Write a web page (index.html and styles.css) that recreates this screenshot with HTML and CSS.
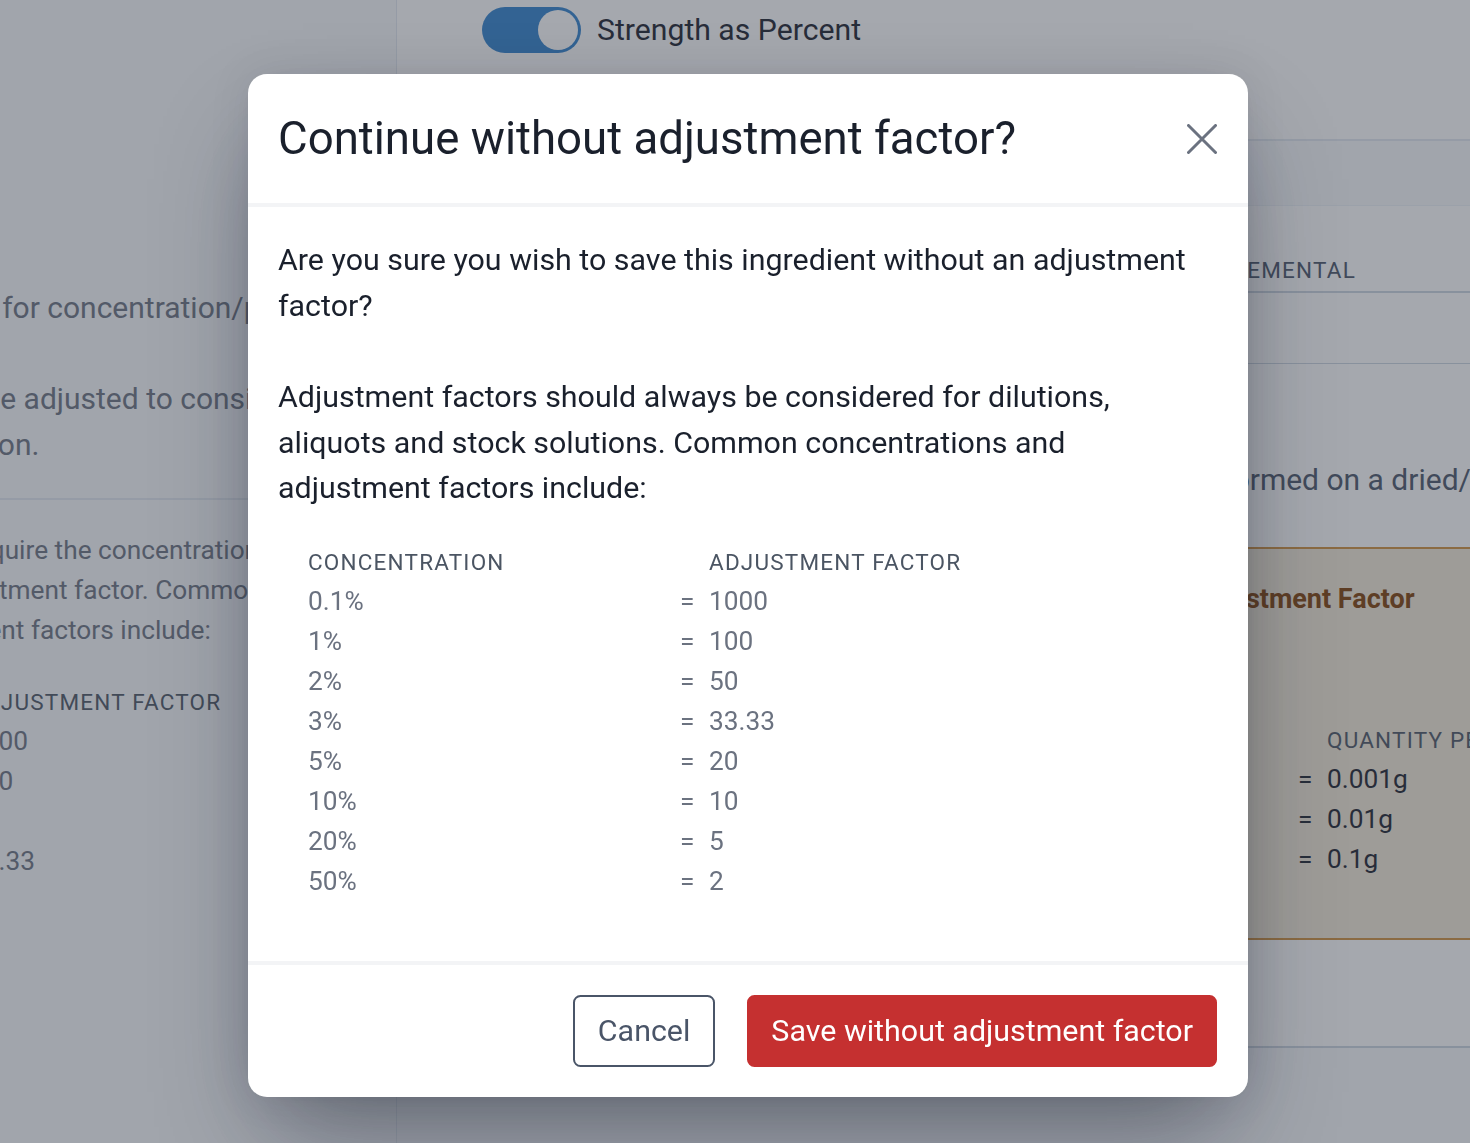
FILE: index.html
```html
<!DOCTYPE html>
<html lang="en">
<head>
  <meta charset="UTF-8" />
  <title>Ingredient Strength</title>
  <link rel="stylesheet" href="styles.css">
</head>
<body>

  <!-- Ingredient page (behind the dialog) -->
  <div class="page">
    <aside class="sidebar">
      <p class="note note-lead">Strength is used for concentration/purity calculations.</p>
      <p class="note">Amounts must be adjusted to consider the dilution<br>in the final solution.</p>
      <hr class="rule">
      <p class="note note-small">Diluted solutions require the concentration<br>along with the adjustment factor. Common<br>doses and adjustment factors include:</p>
      <div class="factor-table side-table">
        <span class="th">Concentration</span><span></span><span class="th">Adjustment Factor</span>
        <span>0.1%</span><span>=</span><span>1000</span>
        <span>1%</span><span>=</span><span>100</span>
        <span>2%</span><span>=</span><span>50</span>
        <span>3%</span><span>=</span><span>33.33</span>
        <span>5%</span><span>=</span><span>20</span>
        <span>10%</span><span>=</span><span>10</span>
        <span>20%</span><span>=</span><span>5</span>
        <span>50%</span><span>=</span><span>2</span>
      </div>
    </aside>

    <main class="main">
      <div class="toolbar">
        <label class="switch">
          <span class="track"><span class="knob"></span></span>
          Strength as Percent
        </label>
      </div>

      <section class="card">
        <div class="tabs">
          <span class="tab">Assay</span>
          <span class="tab">Supplemental</span>
        </div>
        <div class="field-row"></div>
        <div class="card-body">
          <p class="basis">Assay was performed on a dried/anhydrous basis.</p>
          <div class="callout">
            <h4>Quantity per Adjustment Factor</h4>
            <div class="factor-table callout-table">
              <span class="th">Factor</span><span></span><span class="th">Quantity per 1g</span>
              <span>1000</span><span>=</span><span>0.001g</span>
              <span>100</span><span>=</span><span>0.01g</span>
              <span>10</span><span>=</span><span>0.1g</span>
            </div>
          </div>
        </div>
      </section>
    </main>
  </div>

  <div class="backdrop"></div>

  <!-- Confirm dialog -->
  <div class="dialog-wrap">
    <div class="dialog" role="dialog">
      <div class="dialog-header">
        <h2>Continue without adjustment factor?</h2>
        <button class="close" aria-label="Close">
          <svg width="30" height="30" viewBox="0 0 30 30"><path d="M1.5 1.5 L28.5 28.5 M28.5 1.5 L1.5 28.5" /></svg>
        </button>
      </div>

      <div class="dialog-body">
        <p>Are you sure you wish to save this ingredient without an adjustment factor?</p>
        <p>Adjustment factors should always be considered for dilutions, aliquots and stock solutions. Common concentrations and adjustment factors include:</p>
        <div class="factor-table">
          <span class="th">Concentration</span><span></span><span class="th">Adjustment Factor</span>
          <span>0.1%</span><span>=</span><span>1000</span>
          <span>1%</span><span>=</span><span>100</span>
          <span>2%</span><span>=</span><span>50</span>
          <span>3%</span><span>=</span><span>33.33</span>
          <span>5%</span><span>=</span><span>20</span>
          <span>10%</span><span>=</span><span>10</span>
          <span>20%</span><span>=</span><span>5</span>
          <span>50%</span><span>=</span><span>2</span>
        </div>
      </div>

      <div class="dialog-footer">
        <button class="btn btn-outline">Cancel</button>
        <button class="btn btn-danger">Save without adjustment factor</button>
      </div>
    </div>
  </div>

</body>
</html>
```

FILE: styles.css
```css
* {
  box-sizing: border-box;
}

body {
  margin: 0;
  height: 100vh;
  overflow: hidden;
  font-family: Roboto, 'Liberation Sans', sans-serif;
  color: #1a202c;
  background-color: #f7f9fc;
}

/* page layout */

.page {
  display: grid;
  grid-template-columns: 648px minmax(0, 1fr);
  margin-left: -251px;
  min-height: 100vh;
}

.sidebar {
  overflow: hidden;
  background-color: #f7f9fc;
  border-right: 1px solid #e2e8f0;
  padding: 285px 0 0 30px;
}

.note {
  margin: 0 0 30px;
  font-size: 30px;
  line-height: 46px;
  color: #6b7280;
  white-space: nowrap;
}

.note-lead {
  margin-bottom: 45px;
}

.note-small {
  margin-left: -14px;
  margin-bottom: 33px;
  font-size: 26.25px;
  line-height: 40px;
}

.rule {
  border: none;
  border-top: 2px solid #e2e8f0;
  margin: 0 0 30px;
}

.main {
  overflow: hidden;
  display: flex;
  flex-direction: column;
  background-color: #f7f9fc;
}

.toolbar {
  height: 141px;
  background: white;
  border-bottom: 2px solid #e2e8f0;
  padding: 7px 0 0 85px;
}

.switch {
  display: inline-flex;
  align-items: center;
  gap: 16px;
  font-size: 30.2px;
  line-height: 46px;
  color: #1a202c;
}

.track {
  width: 99px;
  height: 46px;
  border-radius: 23px;
  background-color: #3182ce;
  display: flex;
  justify-content: flex-end;
  padding: 3px;
}

.knob {
  width: 40px;
  height: 40px;
  border-radius: 50%;
  background: white;
}

.card {
  margin-top: 64px;
  background: white;
  border-top: 1px solid #edf2f7;
  border-bottom: 2px solid #cbd5e0;
}

.tabs {
  display: flex;
  justify-content: flex-end;
  gap: 60px;
  padding: 49px 114px 6px 0;
  border-bottom: 2px solid #cbd5e0;
  font-size: 22.5px;
  line-height: 30px;
  letter-spacing: 1.2px;
  text-transform: uppercase;
  color: #4a5568;
}

.field-row {
  height: 71px;
  border-bottom: 1px solid #cbd5e0;
}

.card-body {
  padding: 93px 0 106px 632px;
}

.basis {
  margin: 0 0 44px;
  font-size: 30px;
  line-height: 46px;
  color: #4a5568;
  white-space: nowrap;
}

.callout {
  background-color: #f2e9d7;
  border-top: 2px solid #d0903c;
  border-bottom: 2px solid #d0903c;
  padding: 30px 0 59px 6px;
}

.callout h4 {
  margin: 0 0 102px;
  font-size: 27px;
  line-height: 40px;
  font-weight: bold;
  color: #7f3f06;
  white-space: nowrap;
}

/* concentration / factor tables */

.factor-table {
  display: grid;
  grid-template-columns: 372px 29px auto;
  margin-left: 30px;
  font-size: 26.25px;
  line-height: 40px;
  color: #6b7280;
  white-space: nowrap;
}

.factor-table .th {
  font-size: 22.5px;
  line-height: 38px;
  letter-spacing: 1.2px;
  text-transform: uppercase;
  color: #4b5563;
}

.side-table {
  margin-left: 0;
  grid-template-columns: 161px 29px auto;
}

.callout-table {
  margin-left: 0;
  grid-template-columns: 263px 29px auto;
  color: #1a202c;
}

/* dialog */

.backdrop {
  position: fixed;
  inset: 0;
  background-color: rgba(55, 62, 75, 0.45);
}

.dialog-wrap {
  position: fixed;
  inset: 0;
  display: flex;
  align-items: center;
  justify-content: center;
  padding: 28px 0 0 26px;
}

.dialog {
  width: 1000px;
  background: white;
  border-radius: 19px;
  box-shadow: 0 50px 100px -20px rgba(17, 24, 39, 0.45), 0 0 40px rgba(17, 24, 39, 0.1);
}

.dialog-header {
  display: flex;
  align-items: center;
  justify-content: space-between;
  padding: 31px 31px 31px 30px;
  border-bottom: 4px solid #f3f4f6;
}

.dialog-header h2 {
  margin: 0;
  font-size: 45.6px;
  line-height: 67px;
  font-weight: normal;
  color: #1a202c;
}

.close {
  border: none;
  background: none;
  padding: 0;
  width: 30px;
  height: 30px;
  cursor: pointer;
}

.close svg {
  display: block;
  stroke: #6b7280;
  stroke-width: 3;
  stroke-linecap: round;
}

.dialog-body {
  padding: 30px 40px 60px 30px;
}

.dialog-body p {
  margin: 0 0 46px;
  font-size: 30.4px;
  line-height: 45.6px;
  color: #1a202c;
}

.dialog-body p + p {
  margin-bottom: 32px;
}

.dialog-footer {
  display: flex;
  justify-content: flex-end;
  gap: 32px;
  padding: 30px 31px 30px 30px;
  border-top: 4px solid #f3f4f6;
}

.btn {
  font-family: inherit;
  font-size: 30.4px;
  line-height: 68px;
  height: 72px;
  border-radius: 7.5px;
  cursor: pointer;
}

.btn-outline {
  padding: 0 23px;
  background: white;
  color: #4a5568;
  border: 2px solid #4a5568;
}

.btn-danger {
  padding: 0 22px;
  background-color: #c53030;
  color: white;
  border: 2px solid #c53030;
}
```
